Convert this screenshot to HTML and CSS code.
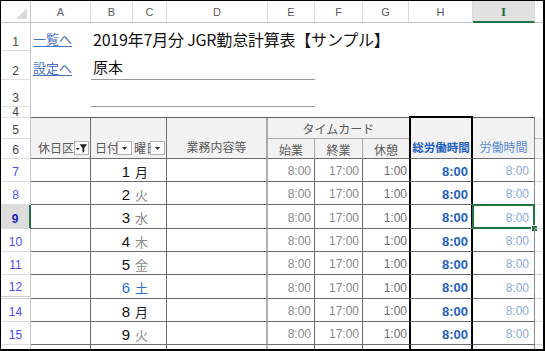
FILE: index.html
```html
<!DOCTYPE html>
<html lang="ja">
<head>
  <meta charset="UTF-8" />
  <title>JGR勤怠計算表</title>
  <link rel="stylesheet" href="styles.css">
</head>
<body>
  <div class="sheet" id="sheet">
    <!-- column headings -->
    <div class="ch corner"></div>
    <div class="ch">A</div>
    <div class="ch">B</div>
    <div class="ch">C</div>
    <div class="ch">D</div>
    <div class="ch">E</div>
    <div class="ch">F</div>
    <div class="ch">G</div>
    <div class="ch">H</div>
    <div class="ch sel">I</div>
    <div class="ch last"></div>

    <!-- row 1 -->
    <div class="rh">1</div>
    <div class="c"><a class="link" href="#">一覧へ</a></div>
    <div class="c title span9">2019年7月分 JGR勤怠計算表【サンプル】</div>

    <!-- row 2 -->
    <div class="rh">2</div>
    <div class="c"><a class="link" href="#">設定へ</a></div>
    <div class="c name span4">原本</div>
    <div class="c span5"></div>

    <!-- row 3 -->
    <div class="rh">3</div>
    <div class="c"></div>
    <div class="c name span4"></div>
    <div class="c span5"></div>

    <!-- row 4 -->
    <div class="rh r4">4</div>
    <div class="c edge span7"></div>
    <div class="c edge thick"></div>
    <div class="c edge"></div>
    <div class="c"></div>

    <!-- rows 5-6: table header -->
    <div class="rh">5</div>
    <div class="c hd span2r left pad-a">休日区分
      <span class="fbtn">
        <svg width="14" height="12" viewBox="0 0 14 12"><polygon points="5,2 13,2 10,6 10,10 8,11 8,6" fill="#222"/><polygon points="1,6 5,6 3,8.5" fill="#222"/></svg>
      </span>
    </div>
    <div class="c hd span2r left pad-b">日付
      <span class="fbtn"><svg width="13" height="12" viewBox="0 0 13 12"><polygon points="4,5 9,5 6.5,8" fill="#333"/></svg></span>
    </div>
    <div class="c hd span2r left pad-c">曜日
      <span class="fbtn"><svg width="13" height="12" viewBox="0 0 13 12"><polygon points="4,5 9,5 6.5,8" fill="#333"/></svg></span>
    </div>
    <div class="c hd span2r bottom wide">業務内容等</div>
    <div class="c hd span3 center card">タイムカード</div>
    <div class="c hd span2r bottom total head-total">総労働時間</div>
    <div class="c hd span2r bottom head-work">労働時間</div>
    <div class="c hd side"></div>
    <div class="rh">6</div>
    <div class="c hd center sub">始業</div>
    <div class="c hd center sub">終業</div>
    <div class="c hd center sub last-sub">休憩</div>
    <div class="c hd side"></div>
  </div>

  <script>
    const days = [
      [7, 1, '月'], [8, 2, '火'], [9, 3, '水'], [10, 4, '木'], [11, 5, '金'],
      [12, 6, '土'], [14, 8, '月'], [15, 9, '火']
    ];
    const sheet = document.getElementById('sheet');

    function addRow(row, day, wd) {
      const kind = wd === '土' ? 'sat' : (wd === '月' ? 'mon' : 'wk');
      const rhClass = 'rh f' + (row === 9 ? ' sel' : '') + (row === 12 ? ' skip' : '');
      const time = (t) => (row ? t : '');
      sheet.insertAdjacentHTML('beforeend', `
        <div class="${rhClass}">${row || ''}</div>
        <div class="c d a"></div>
        <div class="c d num ${kind}">${day}</div>
        <div class="c d wd ${kind}">${wd}</div>
        <div class="c d wide"></div>
        <div class="c d t start">${time('8:00')}</div>
        <div class="c d t end">${time('17:00')}</div>
        <div class="c d t brk">${time('1:00')}</div>
        <div class="c d t total sum">${time('8:00')}</div>
        <div class="c d t work${row === 9 ? ' picked' : ''}">${time('8:00')}</div>
        <div class="c d side"></div>`);
    }

    days.forEach(([row, day, wd]) => addRow(row, day, wd));
    addRow(0, '', ''); // next row, only its top edge shows
  </script>
</body>
</html>
```

FILE: styles.css
```css
body {
  margin: 0;
  background: #fff;
}

.sheet {
  width: 545px;
  height: 351px;
  box-sizing: border-box;
  border: 1px solid #000;
  border-right-width: 2px;
  border-bottom-width: 2px;
  overflow: hidden;
  display: grid;
  grid-template-columns: 30px 60px 42px 34px 101px 47px 48px 46px 64px 62px 8px;
  grid-template-rows: 22px 28px 29px 27px 11px 21px 20px 23px 23px 24px 23px 23px 24px 23px 23px 23px;
  font-family: "Noto Sans CJK JP", sans-serif;
  color: #222;
}

.sheet > div {
  box-sizing: border-box;
  min-width: 0;
}

/* column headings */
.ch {
  display: flex;
  align-items: center;
  justify-content: center;
  border-right: 1px solid #dcdcdc;
  border-bottom: 1px solid #c4c4c4;
  font: 11px "Liberation Sans", sans-serif;
  color: #5a5a5a;
  padding-top: 1px;
}

.ch.corner {
  position: relative;
  border-right-color: #c4c4c4;
}

.ch.corner::after {
  content: "";
  position: absolute;
  right: 3px;
  bottom: 3px;
  border-left: 11px solid transparent;
  border-bottom: 11px solid #dadada;
}

.ch.sel {
  background: #e1e1e1;
  border-bottom: 2px solid #217346;
  color: #1e6b3f;
  font: bold 13px "Liberation Serif", serif;
}

.ch.last {
  border-right: none;
}

/* row headings */
.rh {
  display: flex;
  align-items: flex-end;
  justify-content: center;
  padding-bottom: 2px;
  border-right: 1px solid #c4c4c4;
  border-bottom: 1px solid #dedede;
  font: 12px/12px "Liberation Sans", sans-serif;
  color: #444;
}

.rh.r4 {
  padding-bottom: 0;
  line-height: 10px;
}

.rh.f {
  color: #4d4df2;
  padding-bottom: 3px;
}

.rh.sel {
  background: #dcdcdc;
  border-right: 2px solid #217346;
  color: #2020b8;
  font-weight: bold;
}

.rh.skip {
  border-bottom: 3px double #cfcfcf;
}

/* cells */
.c {
  display: flex;
  align-items: center;
  white-space: nowrap;
  overflow: hidden;
  position: relative;
}

.span9 { grid-column: span 9; overflow: visible; }
.span7 { grid-column: span 7; }
.span5 { grid-column: span 5; }
.span4 { grid-column: span 4; }
.span3 { grid-column: span 3; }
.span2r { grid-row: span 2; }

.link {
  padding-left: 2px;
  padding-top: 3px;
  font-size: 13px;
  color: #4a72c4;
  text-decoration: underline;
  text-underline-offset: 2px;
}

.title {
  padding-left: 2px;
  padding-top: 4px;
  font-size: 16px;
  letter-spacing: -0.2px;
  color: #111;
}

.name {
  padding-left: 2px;
  padding-top: 3px;
  font-size: 15px;
  color: #111;
  border-bottom: 1px solid #9a9a9a;
}

.edge {
  border-bottom: 1px solid #5e5e5e;
}

.edge.thick {
  border-bottom: 2px solid #000;
}

/* table header */
.hd {
  background: #f2f2f2;
  font-size: 12px;
  color: #5a5a5a;
  border-right: 1px solid #6e6e6e;
  border-bottom: 1px solid #6e6e6e;
}

.hd.left {
  align-items: flex-end;
  padding-bottom: 2px;
}

.pad-a { padding-left: 7px; }
.pad-b { padding-left: 4px; border-right: none; }
.pad-c { padding-left: 1px; }

.hd.bottom {
  align-items: flex-end;
  justify-content: center;
  padding-bottom: 3px;
}

.hd.center {
  justify-content: center;
}

.hd.wide {
  border-right: 2px solid #a9a9a9;
}

.hd.card {
  border-bottom: 1px solid #ababab;
  border-right: none;
  padding-top: 1px;
}

.hd.sub {
  border-right: 1px solid #ababab;
  padding-top: 2px;
}

.hd.last-sub {
  border-right: none;
}

.hd.side {
  border-right: none;
  border-bottom: 1px solid #bdbdbd;
  background: #f4f4f4;
}

.head-total {
  font-weight: bold;
  font-size: 11.5px;
  color: #1f5fbf;
}

.head-work {
  color: #5b8ad4;
  border-right: 1px solid #8a8a8a;
}

.fbtn {
  position: absolute;
  right: 1px;
  bottom: 3px;
  width: 15px;
  height: 14px;
  box-sizing: border-box;
  border: 1px solid #b3b3b3;
  background: #fbfbfb;
  display: flex;
  align-items: center;
  justify-content: center;
}

/* data rows */
.d {
  border-bottom: 1px solid #6b6b6b;
  padding-top: 2px;
}

.d.a {
  border-right: 1px solid #6b6b6b;
}

.d.num {
  justify-content: flex-end;
  padding-right: 3px;
  font: 15px "Liberation Sans", sans-serif;
  color: #111;
}

.d.wd {
  padding-left: 2px;
  font-size: 13px;
  border-right: 1px solid #6b6b6b;
}

.mon { color: #222; }
.wk { color: #8a8a8a; }
.sat { color: #2f6fcf !important; }

.d.wide {
  border-right: 2px solid #b0b0b0;
}

.d.t {
  justify-content: flex-end;
  font: 12px "Liberation Sans", sans-serif;
  color: #8a8a8a;
}

.d.start { padding-right: 3px; border-right: 1px solid #6b6b6b; }
.d.end { padding-right: 3px; border-right: 1px solid #6b6b6b; }
.d.brk { padding-right: 2px; color: #6e6e6e; }

.total {
  border-left: 2px solid #000;
  border-right: 2px solid #000;
}

.d.sum {
  padding-right: 3px;
  font: bold 13px "Liberation Sans", sans-serif;
  color: #1f5fbf;
}

.d.work {
  padding-right: 5px;
  color: #8eaadb;
  border-right: 1px solid #8a8a8a;
  overflow: visible;
}

.d.side {
  border-bottom-color: #d6d6d6;
}

/* active cell */
.picked::before {
  content: "";
  position: absolute;
  left: -1px;
  top: -1px;
  right: -1px;
  bottom: -1px;
  border: 2px solid #217346;
}

.picked::after {
  content: "";
  position: absolute;
  right: -4px;
  bottom: -4px;
  width: 5px;
  height: 5px;
  background: #217346;
  border: 1px solid #fff;
}
```
